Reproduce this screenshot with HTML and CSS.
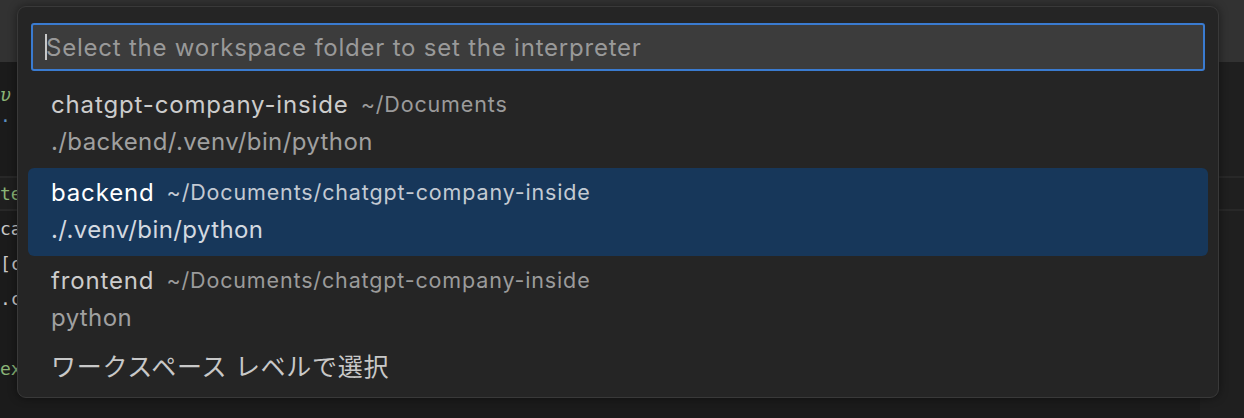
FILE: index.html
```html
<!DOCTYPE html>
<html lang="ja">
<head>
<meta charset="utf-8">
<title>Quick Pick</title>
<link rel="stylesheet" href="styles.css">
</head>
<body>
<div class="window">
  <div class="topbar"></div>
  <div class="editor">
    <div class="line first"><span class="green it">υ</span></div>
    <div class="line second"><span class="blue">.</span></div>
    <div class="line"></div>
    <div class="line current"><span class="green">text</span></div>
    <div class="line"><span class="white">ca</span></div>
    <div class="line"><span class="white">[c</span></div>
    <div class="line"><span class="white">.c</span></div>
    <div class="line"></div>
    <div class="line"><span class="green">ex</span></div>
  </div>

  <div class="quick-pick">
    <div class="input-box">
      <span class="caret"></span>
      <span class="placeholder">Select the workspace folder to set the interpreter</span>
    </div>
    <div class="list">
      <div class="row">
        <div class="row-main"><span class="label">chatgpt-company-inside</span><span class="desc">~/Documents</span></div>
        <div class="detail">./backend/.venv/bin/python</div>
      </div>
      <div class="row selected">
        <div class="row-main"><span class="label">backend</span><span class="desc">~/Documents/chatgpt-company-inside</span></div>
        <div class="detail">./.venv/bin/python</div>
      </div>
      <div class="row">
        <div class="row-main"><span class="label">frontend</span><span class="desc">~/Documents/chatgpt-company-inside</span></div>
        <div class="detail">python</div>
      </div>
      <div class="row single">
        <div class="row-main"><span class="label jp">ワークスペース レベルで選択</span></div>
      </div>
    </div>
  </div>
</div>
</body>
</html>
```

FILE: styles.css
```css
* { box-sizing: border-box; }
html, body {
  margin: 0;
  padding: 0;
  width: 1244px;
  height: 418px;
  overflow: hidden;
  background: #1b1b1b;
}
.window {
  position: relative;
  width: 1244px;
  height: 418px;
  display: flex;
  flex-direction: column;
}
.topbar {
  height: 62px;
  background: #323232;
  flex: none;
}
.editor {
  flex: 1;
  background: linear-gradient(to right, #1b1b1b 0, #1b1b1b 1200px, #1f1f1f 1200px);
  font-family: "DejaVu Sans Mono", monospace;
  font-size: 18px;
  padding-top: 9px;
}
.line {
  height: 35px;
  line-height: 35px;
  white-space: nowrap;
}
.line.first {
  height: 38px;
  line-height: 48px;
}
.line.second {
  height: 32px;
  line-height: 14px;
}
.line.current {
  background: #1f1f1f;
  border-top: 2px solid #282828;
  border-bottom: 2px solid #282828;
  line-height: 31px;
}
.green { color: #8ab476; }
.blue { color: #5c8fc2; }
.white { color: #c8c8c8; }
.it { font-style: italic; }

.quick-pick {
  position: absolute;
  left: 17px;
  top: 6px;
  width: 1202px;
  height: 392px;
  background: #252525;
  border: 1px solid #393939;
  border-radius: 9px;
  box-shadow: 0 0 10px rgba(0, 0, 0, 0.45);
  padding: 16px 13px 0 13px;
  font-family: Inter, "Noto Sans CJK JP", sans-serif;
}
.input-box {
  height: 48px;
  background: #3c3c3c;
  border: 2px solid #3a7bd0;
  border-radius: 3px;
  display: flex;
  align-items: center;
  padding-left: 12px;
}
.caret {
  width: 2px;
  height: 26px;
  background: #c8c8c8;
  flex: none;
  margin-right: -1px;
}
.placeholder {
  color: #999999;
  font-size: 24px;
  letter-spacing: 0.78px;
  white-space: nowrap;
}
.list {
  margin: 9px -3px 0 -3px;
}
.row {
  height: 88px;
  padding: 6px 0 6px 23px;
  border-radius: 6px;
  display: flex;
  flex-direction: column;
}
.row.single {
  height: 44px;
  padding-top: 3px;
}
.row-main {
  height: 36px;
  display: flex;
  align-items: center;
  white-space: nowrap;
}
.label {
  color: #cccccc;
  font-size: 24px;
  letter-spacing: 0.85px;
}
.label.jp {
  font-size: 25px;
  letter-spacing: 0.7px;
}
.desc {
  color: #9b9b9b;
  font-size: 21.5px;
  letter-spacing: 0.85px;
  margin-left: 12px;
}
.detail {
  height: 38px;
  display: flex;
  align-items: center;
  color: #a0a0a0;
  font-size: 24px;
  letter-spacing: 0.4px;
  white-space: nowrap;
}
.row.selected {
  background: #17375a;
}
.row.selected .label { color: #ffffff; }
.row.selected .desc { color: #c3cad3; }
.row.selected .detail { color: #d3d9e0; }
.row.single .label { color: #c8c8c8; }
```
